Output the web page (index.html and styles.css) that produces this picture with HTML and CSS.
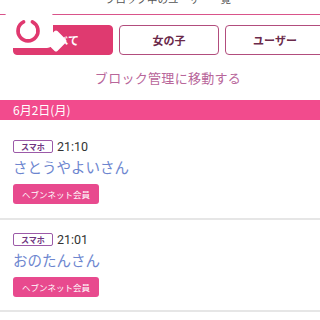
FILE: index.html
```html
<!DOCTYPE html>
<html lang="ja">
<head>
<meta charset="utf-8">
<link rel="stylesheet" href="styles.css">
</head>
<body>
<div class="page">
  <div class="head"><span class="head-text">ブロック中のユーザー一覧</span></div>
  <div class="tabs">
    <div class="tab active">すべて</div>
    <div class="tab">女の子</div>
    <div class="tab">ユーザー</div>
  </div>
  <div class="link">ブロック管理に移動する</div>
  <div class="date">6月2日(月)</div>
  <div class="item first">
    <div class="meta"><span class="badge">スマホ</span><span class="time">21:10</span></div>
    <div class="name">さとうやよいさん</div>
    <div class="member">ヘブンネット会員</div>
  </div>
  <div class="item">
    <div class="meta"><span class="badge">スマホ</span><span class="time">21:01</span></div>
    <div class="name">おのたんさん</div>
    <div class="member">ヘブンネット会員</div>
  </div>
  <div class="overlay">
    <svg width="26" height="26" viewBox="0 0 26 26"><path d="M8.6 3.9 A10 10 0 1 0 17.4 3.9" fill="none" stroke="#e0386f" stroke-width="3.6" stroke-linecap="round"/></svg>
    <div class="notch"></div>
  </div>
</div>
</body>
</html>
```

FILE: styles.css
```css
* { box-sizing: border-box; }
html, body { margin: 0; padding: 0; background: #fff; }
body { font-family: "Noto Sans CJK JP", "Noto Sans", sans-serif; }
.page { position: relative; width: 320px; height: 320px; overflow: hidden; }
.head { height: 15px; border-bottom: 1.5px solid #d9538a; text-align: center; overflow: hidden; }
.head-text { display: block; font-size: 10.5px; line-height: 11px; color: #555; margin-top: -7px; padding-left: 16px; }
.tabs { display: flex; gap: 6px; padding: 10px 0 0 13px; height: 40px; overflow: hidden; }
.tab { flex: 0 0 100px; height: 30px; border: 1.5px solid #b24d7d; border-radius: 4px; display: flex; align-items: center; justify-content: center; font-size: 11px; font-weight: bold; color: #6b2a4a; }
.tab.active { background: #df3a70; border-color: #df3a70; color: #fff; }
.link { height: 45px; display: flex; align-items: center; justify-content: center; padding-left: 16px; font-size: 13px; color: #b8669a; letter-spacing: 0.3px; }
.date { height: 20px; background: #f24b8d; color: #fff; font-size: 12px; line-height: 20px; padding-left: 13px; }
.item { padding: 13px 13px 13px; border-bottom: 2px solid #e6e6e6; }
.item.first { padding-top: 20px; padding-bottom: 14px; }
.meta { display: flex; align-items: center; gap: 4px; height: 13px; }
.badge { display: inline-block; width: 40px; height: 13px; border: 1px solid #9c5aa8; border-radius: 2px; font-size: 8px; line-height: 11px; text-align: center; color: #6e3580; font-weight: bold; }
.time { font-family: Roboto, "Noto Sans", sans-serif; font-size: 12.5px; color: #333; line-height: 13px; }
.name { margin-top: 4px; font-size: 14.5px; line-height: 20px; color: #6d86cf; }
.member { margin-top: 7px; width: 86px; height: 20px; background: #e84a8e; border-radius: 3px; color: #fff; font-size: 8.5px; line-height: 20px; text-align: center; }
.overlay { position: absolute; left: 5px; top: 11px; width: 48px; height: 37px; background: #fff; border-radius: 6px; display: flex; justify-content: center; padding-top: 7px; padding-right: 2px; }
.notch { position: absolute; left: 43px; top: 22px; width: 16px; height: 16px; background: #fff; transform: rotate(45deg); border-radius: 2px; }
```
